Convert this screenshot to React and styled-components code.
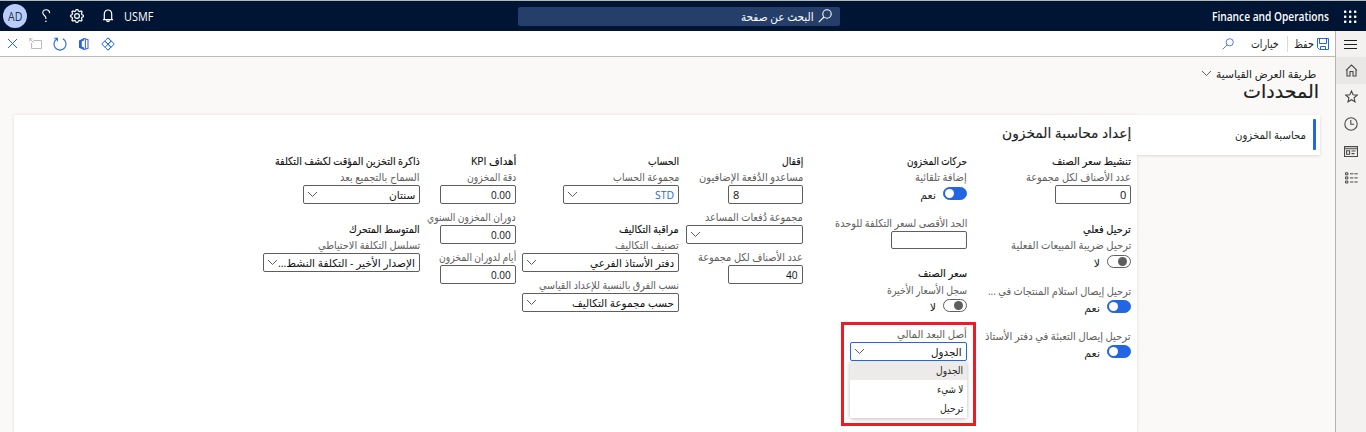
import React, { useLayoutEffect, useRef } from "react";
import styled, { createGlobalStyle, css } from "styled-components";

const ink = "#201f1e";
const blue = "#2266e3";

const Global = createGlobalStyle`
  * { box-sizing: border-box; }
  body { margin: 0; background: #faf9f8; overflow: hidden; }
  #root { font-family: "Open Sans", "DejaVu Sans", sans-serif; font-size: 11px; color: ${ink}; }
`;

/* Text that keeps to a fixed measure */
const FitBox = styled.span`
  display: inline-flex;
  flex: none;
  width: ${(p) => p.$w}px;
  justify-content: flex-start;
  white-space: nowrap;
`;
const FitInner = styled.span`
  flex: none;
  white-space: nowrap;
  transform-origin: ${(p) => (p.$ltr ? "left" : "right")} center;
`;
function Fit({ w, ltr, children }) {
  const ref = useRef(null);
  useLayoutEffect(() => {
    const el = ref.current;
    el.style.transform = `scaleX(${w / el.offsetWidth})`;
  }, [w, children]);
  return (
    <FitBox $w={w} dir={ltr ? "ltr" : "rtl"}>
      <FitInner ref={ref} $ltr={ltr}>{children}</FitInner>
    </FitBox>
  );
}

const Page = styled.div`
  height: 432px;
  display: flex;
  flex-direction: column;
  overflow: hidden;
`;
const TopBar = styled.header`
  height: 31px;
  flex: none;
  border-top: 1px solid #b7b8b6;
  background: #001433;
  color: #fff;
  display: grid;
  grid-template-columns: 526px 314px 526px;
  direction: rtl;
  align-items: center;
`;
const TopStart = styled.div`
  display: flex;
  align-items: center;
  gap: 15px;
  padding-right: 9px;
  font-weight: 600;
  font-size: 12px;
`;
const SearchBox = styled.div`
  width: 322px;
  height: 19px;
  border-radius: 2px;
  background: #263f6a;
  display: flex;
  align-items: center;
  padding-right: 8px;
  gap: 4px;
  font-size: 11.5px;
`;
const TopEnd = styled.div`
  display: flex;
  direction: ltr;
  align-items: center;
  padding-left: 3px;
  font-size: 12px;
`;
const Avatar = styled.div`
  width: 24px;
  height: 24px;
  border-radius: 50%;
  background: #b9cdf8;
  color: #24304e;
  display: flex;
  align-items: center;
  justify-content: center;
  font-size: 12px;
`;
const IconSlot = styled.span`
  display: flex;
  flex: none;
  margin-left: ${(p) => p.$ml || 0}px;
`;

const Body = styled.div`
  flex: 1;
  display: flex;
  min-height: 0;
  direction: rtl;
`;
const SideNav = styled.nav`
  width: 31px;
  flex: none;
  background: #f3f2f1;
  border-left: 1px solid #b5b3b1;
  display: flex;
  flex-direction: column;
`;
const NavItem = styled.div`
  height: ${(p) => p.$h || 27}px;
  display: flex;
  align-items: center;
  justify-content: center;
  padding-bottom: ${(p) => p.$lift || 0}px;
  background: ${(p) => (p.$active ? "#e9e8e7" : "transparent")};
`;
const Main = styled.main`
  width: 1335px;
  display: flex;
  flex-direction: column;
`;
const Toolbar = styled.div`
  height: 26px;
  flex: none;
  background: #fff;
  border-bottom: 1px solid #bdb9b7;
  display: flex;
  justify-content: space-between;
  align-items: center;
  font-size: 11.5px;
`;
const Actions = styled.div`
  display: flex;
  align-items: center;
  padding-right: 6px;
`;
const SaveText = styled.span`
  display: flex;
  margin-right: 3px;
`;
const SearchAction = styled.span`
  display: flex;
  margin-right: 17px;
`;
const Divider = styled.span`
  width: 1px;
  height: 16px;
  background: #dddbd9;
  margin: 0 6px 0 8px;
`;
const WindowTools = styled.div`
  display: flex;
  direction: ltr;
  align-items: center;
  padding-left: 6px;
  gap: 10px;
`;
const Heading = styled.div`
  height: 58px;
  flex: none;
  padding: 7px 16px 0 0;
  display: flex;
  flex-direction: column;
`;
const ViewName = styled.div`
  height: 18px;
  padding-right: 3px;
  display: flex;
  align-items: center;
  gap: 4px;
`;
const Title = styled.h1`
  margin: 0;
  height: 20px;
  line-height: 19px;
  font-size: 19px;
  font-weight: 400;
  -webkit-text-stroke: 0.2px ${ink};
`;
const Content = styled.div`
  flex: 1;
  display: flex;
  padding-right: 15px;
`;
const Tab = styled.div`
  position: relative;
  z-index: 1;
  width: 183px;
  height: 40px;
  flex: none;
  background: #fff;
  box-shadow: 0 1px 3px rgba(0, 0, 0, 0.13);
  clip-path: inset(-4px -4px -6px 0);
  display: flex;
  align-items: center;
  padding: 0 4px 1px 0;
  gap: 7px;
`;
const TabMark = styled.span`
  width: 3px;
  height: 31px;
  border-radius: 1px;
  background: ${blue};
`;
const Panel = styled.section`
  width: 1123px;
  flex: none;
  background: #fff;
  box-shadow: 0 0 3px rgba(0, 0, 0, 0.13);
  padding: 8px 6px 0 0;
`;
const PanelTitle = styled.h2`
  margin: 0;
  height: 30px;
  line-height: 19px;
  font-size: 14px;
  font-weight: 400;
  -webkit-text-stroke: 0.15px ${ink};
`;
const Columns = styled.div`
  display: flex;
  align-items: flex-start;
`;
const Column = styled.div`
  width: ${(p) => p.$w}px;
  flex: none;
  display: flex;
  flex-direction: column;
  align-items: flex-start;
`;
const Group = styled.h3`
  margin: ${(p) => p.$mt || 0}px 0 0;
  height: 16px;
  line-height: 15px;
  font-size: 11px;
  font-weight: 400;
  color: #111;
  -webkit-text-stroke: 0.15px #111;
`;
const FieldBox = styled.div`
  margin-top: ${(p) => p.$mt || 0}px;
  display: flex;
  flex-direction: column;
  align-items: flex-start;
`;
const Label = styled.div`
  height: 16px;
  line-height: 16px;
  color: #605e5c;
  display: flex;
`;
const Control = styled.div`
  width: ${(p) => p.$w}px;
  height: ${(p) => p.$h || 19}px;
  border: 1px solid ${(p) => (p.$focus ? blue : "#605e5c")};
  border-radius: 2px;
  background: #fff;
  display: flex;
  align-items: center;
  justify-content: space-between;
  padding: 0 ${(p) => (p.$select ? "4px 1px 3px" : "4px 1px 4px")};
  color: ${(p) => (p.$link ? blue : "#111")};
  ${(p) => p.$end && css`justify-content: flex-end;`}
`;
const SwitchRow = styled.div`
  display: flex;
  gap: 7px;
  height: 13px;
  margin-top: ${(p) => p.$mt}px;
  line-height: 15px;
`;
const Track = styled.span`
  width: 24px;
  height: 13px;
  border-radius: 7px;
  border: 1px solid ${(p) => (p.$on ? blue : "#605e5c")};
  background: ${(p) => (p.$on ? blue : "#fff")};
  display: flex;
  align-items: center;
  justify-content: ${(p) => (p.$on ? "flex-end" : "flex-start")};
  padding: 0 ${(p) => (p.$on ? 1 : 3)}px;
`;
const Knob = styled.span`
  width: 9px;
  height: 9px;
  border-radius: 50%;
  background: ${(p) => (p.$on ? "#fff" : "#605e5c")};
`;
const OpenField = styled.div`
  position: relative;
  margin-top: 14px;
`;
const Highlight = styled.div`
  position: absolute;
  top: -4px;
  right: -9px;
  width: 135px;
  height: 104px;
  border: 3px solid #ed1c24;
`;
const Menu = styled.div`
  width: 117px;
  background: #fff;
  box-shadow: 0 1px 4px rgba(0, 0, 0, 0.28);
  border-radius: 0 0 2px 2px;
`;
const MenuItem = styled.div`
  height: 19px;
  display: flex;
  align-items: center;
  padding: 0 4px 1px 0;
  font-size: 10.5px;
  background: ${(p) => (p.$active ? "#edebe9" : "#fff")};
`;

const Svg = ({ w = 16, h = w, vb, c = "#fff", sw = 1.1, children }) => (
  <svg width={w} height={h} viewBox={vb || `0 0 ${w} ${h}`} fill="none" stroke={c} strokeWidth={sw}>
    {children}
  </svg>
);
const Chevron = ({ c = "#605e5c" }) => (
  <Svg w={11} h={7} c={c} sw={1}><path d="M1 1l4.5 4.5L10 1" /></Svg>
);
const Magnifier = ({ c, s = 14 }) => (
  <Svg w={s} vb="0 0 14 14" c={c} sw={1.1}>
    <circle cx="9" cy="5" r="4.2" /><path d="M6 8L.8 13.2" />
  </Svg>
);

function Gear() {
  const teeth = [];
  for (let i = 0; i < 32; i++) {
    const a = ((i - 0.5) / 32) * Math.PI * 2;
    const r = i % 4 < 2 ? 6.6 : 5.1;
    teeth.push(`${(7 + r * Math.cos(a)).toFixed(2)} ${(7 + r * Math.sin(a)).toFixed(2)}`);
  }
  return (
    <Svg w={14} sw={1.2}>
      <path d={`M${teeth.join("L")}Z`} />
      <circle cx="7" cy="7" r="2.4" />
    </Svg>
  );
}

function Field({ label, lw, mt, children }) {
  return (
    <FieldBox $mt={mt}>
      <Label><Fit w={lw}>{label}</Fit></Label>
      {children}
    </FieldBox>
  );
}
function Select({ w, text, tw, link, focus, ltr }) {
  return (
    <Control $w={w} $select $link={link} $focus={focus}>
      {text ? <Fit w={tw} ltr={ltr}>{text}</Fit> : <span />}
      <Chevron />
    </Control>
  );
}
function Input({ w = 76, h, text, tw, end }) {
  return (
    <Control $w={w} $h={h} $end={end}>{text && <Fit w={tw} ltr>{text}</Fit>}</Control>
  );
}
function Switch({ on, mt = 1 }) {
  return (
    <SwitchRow $mt={mt}>
      <Track $on={on}><Knob $on={on} /></Track>
      <Fit w={on ? 16 : 6}>{on ? "نعم" : "لا"}</Fit>
    </SwitchRow>
  );
}

export default function App() {
  const nav = "#4a4846";
  return (
    <Page>
      <Global />
      <TopBar>
        <TopStart>
          <Svg w={13} c="none">
            {[0, 5, 10].map((y) => [0, 5, 10].map((x) => (
              <rect key={`${x}${y}`} x={x} y={y + 0.5} width="2.4" height="2.4" rx=".6" fill="#fff" />
            )))}
          </Svg>
          <Fit w={117} ltr>Finance and Operations</Fit>
        </TopStart>
        <SearchBox>
          <Magnifier c="#fff" />
          <Fit w={73}>البحث عن صفحة</Fit>
        </SearchBox>
        <TopEnd>
          <Avatar><Fit w={14} ltr>AD</Fit></Avatar>
          <IconSlot $ml={14}>
            <Svg w={10} h={14} sw={1.1}>
              <path d="M8.6 4.3C8.8 2.2 7.3.8 5.2.8 3.2.8 1.8 2 1.8 3.8c0 2.3 3.1 3 3.1 5.1V10" />
              <path d="M4.9 11.8v1.3" strokeWidth="1.4" />
            </Svg>
          </IconSlot>
          <IconSlot $ml={19}><Gear /></IconSlot>
          <IconSlot $ml={18}>
            <Svg w={12} h={14} sw={1.2}>
              <path d="M1 10.6h10M2.3 10.4V5.2C2.3 2.7 3.8 1 6 1s3.7 1.7 3.7 4.2v5.2M4.6 11c0 1 .5 1.7 1.4 1.7S7.4 12 7.4 11" />
            </Svg>
          </IconSlot>
          <IconSlot $ml={10}><Fit w={29} ltr>USMF</Fit></IconSlot>
        </TopEnd>
      </TopBar>
      <Body>
        <SideNav>
          <NavItem $h={26}><Svg w={14} h={12} c="#201f1e"><path d="M0 2.5h13M0 6.5h13M0 10.5h13" /></Svg></NavItem>
          <NavItem $active $lift={1}>
            <Svg w={13} h={13} c={nav}><path d="M1 6.4L6.5 1 12 6.4M2 5.6V12h3V7.5h3V12h3V5.6" /></Svg>
          </NavItem>
          <NavItem $lift={2}>
            <Svg w={13} h={13} c={nav}><path d="M6.5 1l1.6 3.8 4.1.3-3.1 2.7.9 4-3.5-2.1L3 11.8l.9-4L.8 5.1l4.1-.3z" /></Svg>
          </NavItem>
          <NavItem $lift={2}>
            <Svg w={14} h={14} c={nav}><circle cx="7" cy="7" r="6.2" /><path d="M6.8 3v4.3h3.3" /></Svg>
          </NavItem>
          <NavItem $lift={1}>
            <Svg w={14} h={11} c={nav}>
              <path d="M.5.6h13v9.9H.5zM.5 2.7h13M2.6 4.8h3v3.4h-3zM7.5 5h4M7.5 7.6h3" />
            </Svg>
          </NavItem>
          <NavItem $lift={1}>
            <Svg w={13} h={12} c={nav} sw={1}>
              <path d="M.5.8h2.4v2H.5zM.5 4.9h2.4v2H.5zM.5 9h2.4v2H.5zM5 1.8h3.4M9.4 1.8h3.3M5 5.9h3.4M9.4 5.9h3.3M5 10h3.4M9.4 10h3.3" />
            </Svg>
          </NavItem>
        </SideNav>
        <Main>
          <Toolbar>
            <Actions>
              <Svg w={12} c={blue} sw={1}>
                <path d="M.5.5h11v11h-9l-2-2zM2.5.5v5h7v-5M3.5 11.5v-3h5v3" />
              </Svg>
              <SaveText><Fit w={20}>حفظ</Fit></SaveText>
              <Divider />
              <Fit w={28}>خيارات</Fit>
              <SearchAction><Magnifier c="#5570e6" s={12} /></SearchAction>
            </Actions>
            <WindowTools>
              <Svg w={13} c={blue} sw={1}><path d="M2 2l9 9M11 2l-9 9" /></Svg>
              <Svg w={14} c="#bcbab8" sw={1}><path d="M4.5 3.5h8v8h-10V6M.8 1.8l4 4M.8 4.5V1.8h2.7" /></Svg>
              <Svg w={14} c={blue} sw={1.1}><path d="M4.2 1.8A6 6 0 1 0 9.8 1.8M1.2 1.2h3.2v3" /></Svg>
              <Svg w={14} c={blue} sw={1.1}>
                <path d="M2 3.5L7 1v2.4L4.8 4.2v5.2L7 10.4V13l-5-2.2z" fill={blue} stroke="none" />
                <path d="M6.5 1.4l4.5 1.2v8.8l-4.5 1.2M8.4 2.5v9" stroke="#4a68e6" />
              </Svg>
              <Svg w={14} c={blue} sw={1}>
                <path d="M.8 7L5 2.6 7 .8l2 1.8L13.2 7 9 11.4 7 13.2l-2-1.8zM3.8 4l6.1 6.3M10.2 4l-6.1 6.3M7 1l3 3.2L7 7 4 4.2M7 7l3 3-3 3" />
              </Svg>
            </WindowTools>
          </Toolbar>
          <Heading>
            <ViewName><Fit w={100}>طريقة العرض القياسية</Fit><Chevron /></ViewName>
            <Title><Fit w={76}>المحددات</Fit></Title>
          </Heading>
          <Content>
            <Tab><TabMark /><Fit w={71}>محاسبة المخزون</Fit></Tab>
            <Panel>
              <PanelTitle><Fit w={129}>إعداد محاسبة المخزون</Fit></PanelTitle>
              <Columns>
                <Column $w={164}>
                  <Group><Fit w={79}>تنشيط سعر الصنف</Fit></Group>
                  <Field label="عدد الأصناف لكل مجموعة" lw={105}><Input text="0" tw={6} /></Field>
                  <Group $mt={17}><Fit w={48}>ترحيل فعلي</Fit></Group>
                  <Field label="ترحيل ضريبة المبيعات الفعلية" lw={120}><Switch mt={2} /></Field>
                  <Field mt={15} label="ترحيل إيصال استلام المنتجات في ..." lw={143}><Switch on /></Field>
                  <Field mt={15} label="ترحيل إيصال التعبئة في دفتر الأستاذ" lw={146}><Switch on /></Field>
                </Column>
                <Column $w={164}>
                  <Group><Fit w={60}>حركات المخزون</Fit></Group>
                  <Field label="إضافة تلقائية" lw={52}><Switch on mt={2} /></Field>
                  <Field mt={15} label="الحد الأقصى لسعر التكلفة للوحدة" lw={132}><Input h={18} /></Field>
                  <Group $mt={16}><Fit w={49}>سعر الصنف</Fit></Group>
                  <Field mt={1} label="سجل الأسعار الأخيرة" lw={80}><Switch mt={1} /></Field>
                  <OpenField>
                    <Field label="أصل البعد المالي" lw={70}>
                      <Select w={117} text="الجدول" tw={31} focus />
                    </Field>
                    <Menu>
                      <MenuItem $active><Fit w={27}>الجدول</Fit></MenuItem>
                      <MenuItem><Fit w={26}>لا شيء</Fit></MenuItem>
                      <MenuItem><Fit w={23}>ترحيل</Fit></MenuItem>
                    </Menu>
                    <Highlight />
                  </OpenField>
                </Column>
                <Column $w={124}>
                  <Group><Fit w={21}>إقفال</Fit></Group>
                  <Field label="مساعدو الدُفعة الإضافيون" lw={104}><Input w={75} text="8" tw={6} end /></Field>
                  <Field mt={5} label="مجموعة دُفعات المساعد" lw={98}><Select w={117} /></Field>
                  <Field mt={5} label="عدد الأصناف لكل مجموعة" lw={105}><Input w={75} text="40" tw={12} /></Field>
                </Column>
                <Column $w={163}>
                  <Group><Fit w={31}>الحساب</Fit></Group>
                  <Field label="مجموعة الحساب" lw={66}><Select w={116} text="STD" tw={19} link ltr /></Field>
                  <Group $mt={17}><Fit w={60}>مراقبة التكاليف</Fit></Group>
                  <Field label="تصنيف التكاليف" lw={64}><Select w={157} text="دفتر الأستاذ الفرعي" tw={84} /></Field>
                  <Field mt={5} label="نسب الفرق بالنسبة للإعداد القياسي" lw={140}>
                    <Select w={157} text="حسب مجموعة التكاليف" tw={102} />
                  </Field>
                </Column>
                <Column $w={96}>
                  <Group><Fit w={45}>أهداف KPI</Fit></Group>
                  <Field label="دقة المخزون" lw={49}><Input text="0.00" tw={20} /></Field>
                  <Field mt={5} label="دوران المخزون السنوي" lw={89}><Input text="0.00" tw={20} /></Field>
                  <Field mt={5} label="أيام لدوران المخزون" lw={77}><Input text="0.00" tw={20} /></Field>
                </Column>
                <Column $w={170}>
                  <Group><Fit w={145}>ذاكرة التخزين المؤقت لكشف التكلفة</Fit></Group>
                  <Field label="السماح بالتجميع بعد" lw={80}><Select w={117} text="سنتان" tw={26} /></Field>
                  <Group $mt={17}><Fit w={71}>المتوسط المتحرك</Fit></Group>
                  <Field label="تسلسل التكلفة الاحتياطي" lw={102}>
                    <Select w={157} text="الإصدار الأخير - التكلفة النشط..." tw={137} />
                  </Field>
                </Column>
              </Columns>
            </Panel>
          </Content>
        </Main>
      </Body>
    </Page>
  );
}
